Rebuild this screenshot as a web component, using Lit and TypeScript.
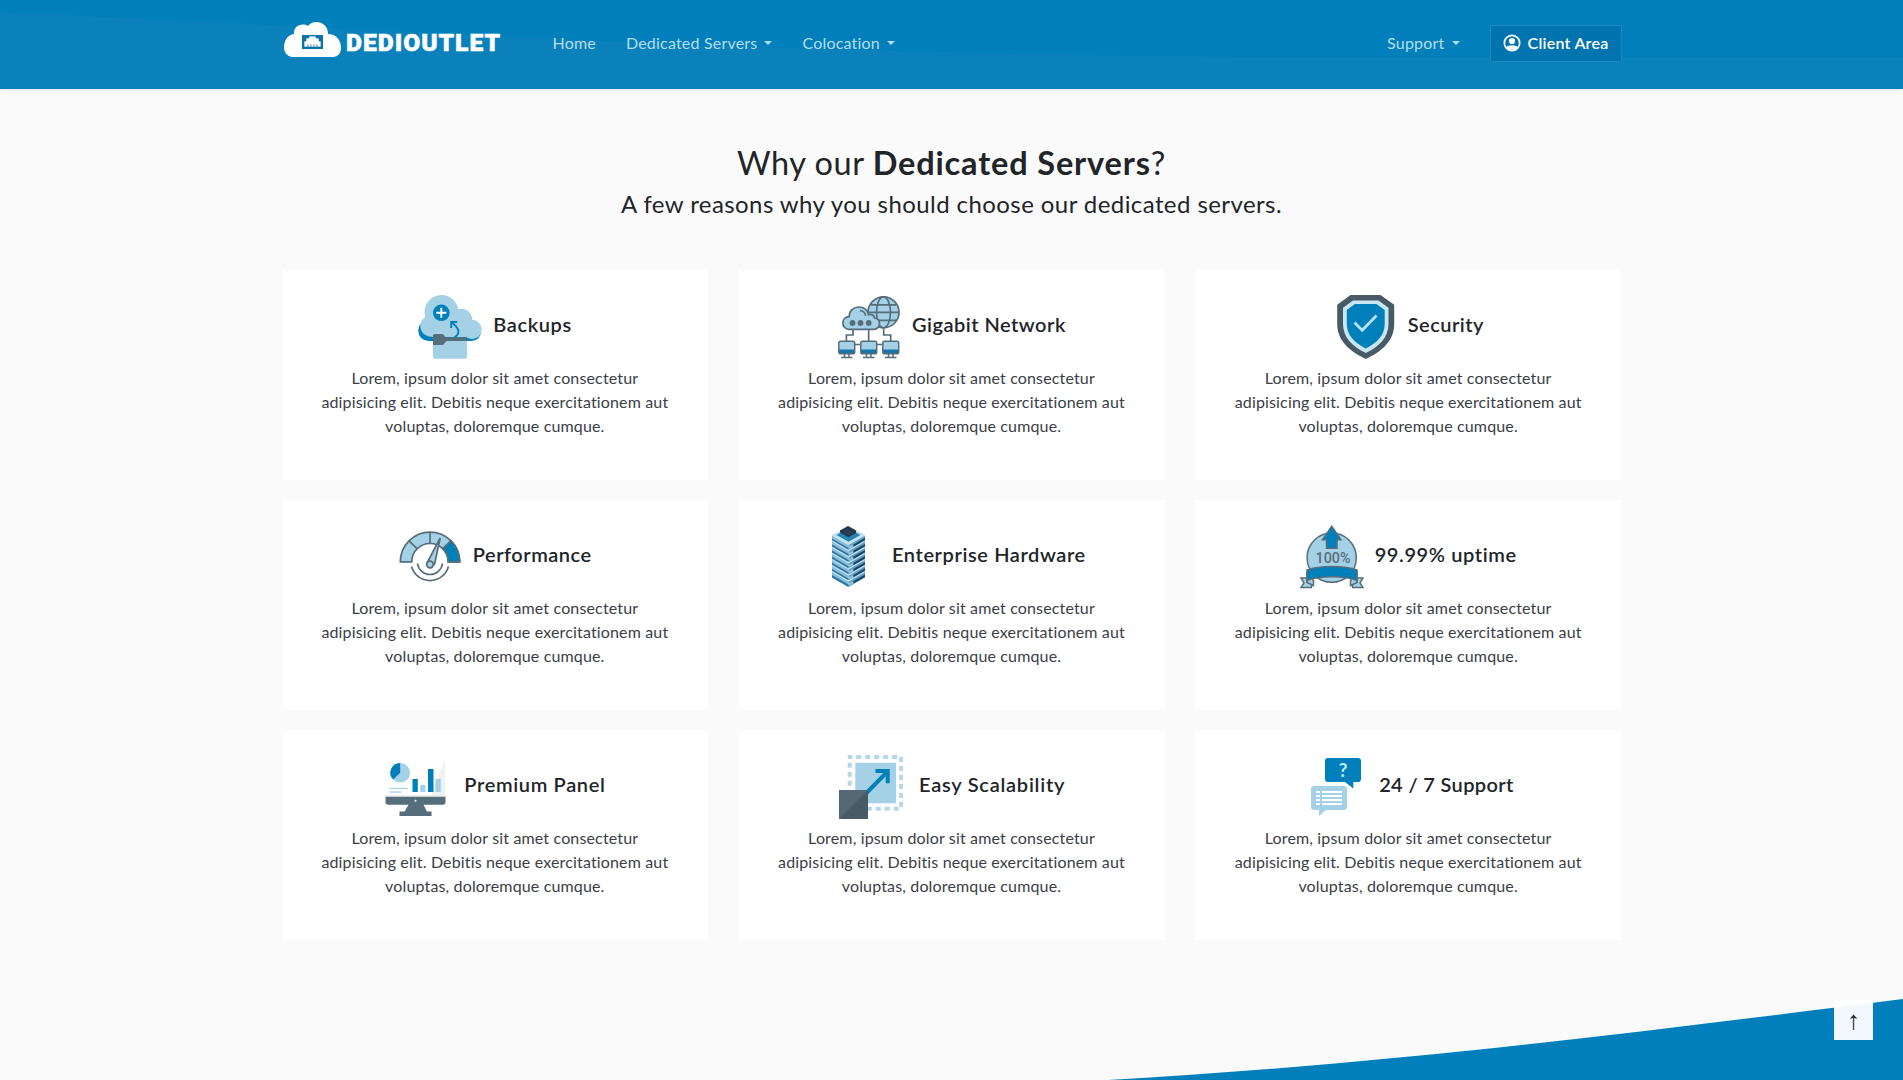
import { LitElement, html, svg, css } from "lit";
import { customElement } from "lit/decorators.js";

const L = "#a5d1e6", B = "#0080bb", G = "#566e7a", D = "#475a66";

const monitor = (x: number) => svg`<g transform="translate(${x} 45.5)">
  <rect x="1" y="1" width="15.5" height="12" rx="1.6" fill=${L}/>
  <path d="M1 9h15.500v2.500a1.500 1.500 0 0 1-1.500 1.500H2.500A1.500 1.500 0 0 1 1 11.500z" fill="#1575a8"/>
  <rect x=".8" y=".8" width="15.900" height="12.400" rx="1.800" fill="none" stroke=${G} stroke-width="1.500"/>
  <path d="M6.500 13v3.500M11 13v3.500M3 17h11.500" stroke=${G} stroke-width="1.500" fill="none"/></g>`;

const serverLayers = [0, 1, 2, 3, 4, 5, 6].map((i) => {
  const y = 10 + i * 6.1;
  return svg`<path d="M15 ${y}l16.500 9.500v6l-16.500-9.500z" fill="#8bbcd9"/>
  <path d="M48 ${y}l-16.500 9.500v6l16.500-9.500z" fill="#5fa0c5"/>
  <path d="M15 ${y + 3.4}l16.500 9.500v2.600l-16.500-9.500z" fill="#2b77a6"/>
  <path d="M36.500 ${y + 9.4}l11.500-6.600v2.600l-11.500 6.600z" fill="#1b4568"/>
  <path d="M15 ${y}l16.500 9.500 16.500-9.500" fill="none" stroke="#c3e2f0" stroke-width="1.200"/>
  <path d="M33 ${y + 11.3}v2M35 ${y + 10.3}v2" stroke="#e3f5fc" stroke-width=".9"/>`;
});

const icons: Record<string, unknown> = {
  backups: svg`<g fill=${B}><rect x=".2" y="25" width="26" height="21" rx="10.500"/><rect x="15" y="27" width="48" height="19" rx="9.500"/></g>
    <g fill=${L}><circle cx="23.500" cy="17" r="17"/><circle cx="43" cy="25" r="11.300"/><circle cx="54" cy="34.500" r="9.700"/><circle cx="13" cy="31" r="10.700"/><path d="M12 20h32l10 22H14z"/></g>
    <path d="M15 45h34v17a1.700 1.700 0 0 1-1.700 1.700H16.700A1.700 1.700 0 0 1 15 62z" fill=${L}/>
    <path d="M15 40.500a1.500 1.500 0 0 1 1.500-1.500h7.500c2 0 2.500 3.300 5 3.300h18.500a1.500 1.500 0 0 1 1.500 1.500V46H29c-2 0-2.500 4-5 4h-9z" fill=${G}/>
    <circle cx="23.300" cy="17.800" r="8.300" fill=${B}/><path d="M23.300 12.800v10M18.300 17.800h10" stroke="#fff" stroke-width="1.900"/>
    <path d="M36.500 42.300c5.500-3.300 5.800-8.800-3-14.800M33.200 33v-6h6" fill="none" stroke=${B} stroke-width="1.900"/>`,
  network: svg`<g fill="none" stroke=${G} stroke-width="1.700"><circle cx="45.500" cy="17.300" r="15.500" fill=${L}/><ellipse cx="45.500" cy="17.300" rx="7" ry="15.500"/><path d="M33 9.800h25M30 17.300h31M33 25.300h25"/>
    <path d="M15 34v6H8.400v6M30.700 34v12M45.700 34v6h7v6M17 49.500h5M39 49.500h5"/>
    <path d="M10.500 34.300a6 6 0 0 1-5.600-6.300c0-3.800 2.700-6.200 6.300-6.300C11 16 15.500 12 21 12c5 0 8.800 3.300 9.500 7.800 2.200-.9 5.700 0 6 3.200 3 .3 5 2.600 5 5.500 0 3.300-2.500 5.800-5.500 5.800z" fill=${L}/><path d="M22 15.500c3 .3 5 2.300 5.700 5.300"/></g>
    <g fill=${G}><circle cx="14.500" cy="28" r="2.900"/><circle cx="22.500" cy="28" r="2.900"/><circle cx="30.700" cy="28" r="2.900"/></g>${monitor(0)}${monitor(22)}${monitor(44)}`,
  security: svg`<path d="M17.500 0h30l13.700 9.800V29c0 17-12.500 27.500-28.400 35C17 56.500 4.200 46 4.200 29V9.800z" fill=${D}/>
    <path d="M20 5.500h25.500l10 7.300V29c0 13.500-9.500 22.500-22.700 29C19.500 51.500 10 42.500 10 29V12.800z" fill="#c9e6f4"/>
    <path d="M22 9h21.500l8.200 6v14c0 11.500-7.700 18.500-18.900 24.500C21.500 47.500 13.800 40.500 13.800 29V15z" fill=${B}/>
    <path d="M21.500 27.500l7.700 7.700L43.500 20.500" fill="none" stroke="#b8e2f5" stroke-width="2.800"/>`,
  performance: svg`<g transform="translate(0 -.5)" stroke=${G} stroke-width="1.700" fill="none"><path d="M1.300 37.300a29.700 29.700 0 0 1 59.400 0H49.300a18.300 18.300 0 0 0-36.600 0z" fill=${L}/>
    <path d="M52 16.300a29.700 29.700 0 0 1 8.700 21H49.300a18.300 18.300 0 0 0-5.300-13z" fill=${B}/><path d="M10 16.300l8.400 8M31 7.600V19M52 16.300l-8.400 8"/>
    <path d="M12.500 42a19.200 19.200 0 0 0 37 0M18.500 39a12.600 12.600 0 0 0 25 0"/><path d="M41.200 13.500l-5.500 25.500c-.8 3-8.500 2.500-7.700-.5z" fill=${L}/><circle cx="31" cy="40" r="3.300" fill=${L}/></g>`,
  hardware: svg`${serverLayers}<path d="M31.500.700L48 10l-16.500 9.500L15 10z" fill="#c3e2f0"/><path d="M31.500 3.300L43.500 10l-12 6.800L19.500 10z" fill="#2684b4"/><path d="M31 .900L39 5.500v2.600l-7.500 4.200-8.500-4.800V5.500z" fill="#22364c"/><path d="M29 4.800l7 3.800M27 6.500l6 3.400" stroke="#3f5770" stroke-width=".7"/>`,
  uptime: svg`<g stroke=${G} stroke-width="1.500"><circle cx="31.700" cy="32.700" r="24.600" fill=${L}/><path d="M31.700 1.300l9.300 13.500h-4v8.500H26.500v-8.500h-4z" fill=${B}/>
    <path d="M1 53h10.500v9.500H1l3-4.700zM63 53H52.500v9.500H63l-3-4.700z" fill=${L}/><path d="M7 48v9.500l6.500 3v-5zM57 48v9.500l-6.500 3v-5z" fill=${L}/>
    <path d="M7 45c12-4.800 38-4.800 50 0v10.500c-12-5-38-5-50 0z" fill=${B}/></g>
    <text x="15.500" y="38.200" textLength="35" lengthAdjust="spacingAndGlyphs" font-family="Roboto, sans-serif" font-weight="500" font-size="14.500" fill=${G}>100%</text>`,
  panel: svg`<path d="M61 4v38H46z" fill="#f0f1f3"/><circle cx="16.200" cy="17.700" r="9.800" fill=${L}/><path d="M16.200 17.700V7.900a9.800 9.800 0 0 0-7 16.700z" fill=${B}/>
    <g fill=${B}><rect x="28.500" y="24" width="5.300" height="13"/><rect x="44" y="14" width="5.500" height="23"/></g><g fill=${L}><rect x="36.200" y="30" width="5.300" height="7"/><rect x="51.500" y="24" width="5.300" height="13"/><rect x="5.500" y="32.800" width="18.300" height="1.300"/><rect x="5.500" y="36.400" width="12" height="1.300"/></g>
    <path d="M1.500 40h60v1.700h-60z" fill="#eceff1"/><path d="M1.500 41.700h60V47a2.700 2.700 0 0 1-2.700 2.700H4.200A2.700 2.700 0 0 1 1.500 47zM24.500 49.700h15l3.500 7H20.500zM15.500 56.500h32V61h-32z" fill=${G}/><circle cx="31.500" cy="45.700" r="1" fill="#fff"/>`,
  scale: svg`<rect x="10.700" y="2" width="51.400" height="51.700" fill="none" stroke="#b3d8e7" stroke-width="4" stroke-dasharray="5 4" stroke-dashoffset="2.500"/><rect x="16.300" y="7.700" width="40.700" height="40.600" fill=${L}/>
    <path d="M27 38.500l22-22.500M36.500 16h12.200v12.200" fill="none" stroke=${B} stroke-width="4"/><path d="M0 33h14v2H0z" fill="#fff"/><rect y="35" width="29" height="29" fill="#566874"/><path d="M29 35v29H0z" fill=${D}/>`,
  support: svg`<path d="M25 3h30a3 3 0 0 1 3 3v18a3 3 0 0 1-3 3h-4.700v6.500L42 27H25a3 3 0 0 1-3-3V6a3 3 0 0 1 3-3z" fill=${B}/>
    <text x="40" y="21.500" text-anchor="middle" font-family="Lato, sans-serif" font-size="19" font-weight="700" fill="#c5ecfa">?</text>
    <path d="M11 31h30a3 3 0 0 1 3 3v18a3 3 0 0 1-3 3H23l-7 6v-6h-5a3 3 0 0 1-3-3V34a3 3 0 0 1 3-3z" fill=${L}/>
    <path d="M13 37h4M19 37h20M13 41h4M19 41h20M13 45h4M19 45h20M13 49h4M19 49h20" stroke="#fff" stroke-width="1.900"/>`,
};

/* gap: icon-to-title distance; width and spacing: title box and tracking, in px */
const features = [
  { icon: "backups", title: "Backups", width: 79, spacing: 0.6, gap: 10 },
  { icon: "network", title: "Gigabit Network", width: 154, spacing: 0.5, gap: 9 },
  { icon: "security", title: "Security", width: 77, spacing: 0.5, gap: 10 },
  { icon: "performance", title: "Performance", width: 119, spacing: 0.5, gap: 9 },
  { icon: "hardware", title: "Enterprise Hardware", width: 195, spacing: 0.6, gap: 10 },
  { icon: "uptime", title: "99.99% uptime", width: 143, spacing: 0.6, gap: 10 },
  { icon: "panel", title: "Premium Panel", width: 142, spacing: 0.65, gap: 15 },
  { icon: "scale", title: "Easy Scalability", width: 146, spacing: 0.75, gap: 15 },
  { icon: "support", title: "24 / 7 Support", width: 135, spacing: 0.35, gap: 11 },
];

@customElement("app-root")
export class AppRoot extends LitElement {
  static styles = css`
    :host { display: block; height: 1080px; overflow: hidden; position: relative; background: #fafafa; color: #212529; font-family: Lato, "Open Sans", sans-serif; font-size: 16px; line-height: 24px; }
    * { box-sizing: border-box; }
    .wrap { width: 1340px; margin: 0 auto; }
    header { position: relative; height: 89px; background: #007fbb; box-shadow: 0 1px 3px #dbe8f7; }
    .wave { position: absolute; inset: 0; width: 100%; height: 89px; }
    .bar { position: relative; display: flex; align-items: center; height: 87px; }
    .logo { width: 219px; height: 38px; margin: -8px 0 0 1px; }
    nav { display: flex; gap: 30px; margin-left: 51px; flex: 1; }
    .link { display: flex; align-items: center; gap: 7px; color: #b5ddef; white-space: nowrap; letter-spacing: .2px; margin-top: -2px; }
    .caret { border: 4px solid transparent; border-top-color: currentColor; border-bottom: 0; margin-top: 0; }
    .client { display: flex; align-items: center; gap: 7px; width: 132px; height: 37px; margin-left: 30px; padding-left: 12px; padding-bottom: 1px; border: 1px solid #1a86bc; background: #0074ae; color: #fff; font-weight: 600; letter-spacing: .25px; white-space: nowrap; }
    .intro { text-align: center; padding-top: 54px; height: 181px; }
    h1 { margin: 0; font-size: 32.5px; line-height: 40px; font-weight: 400; letter-spacing: .5px; }
    h1 b { font-weight: 700; letter-spacing: .85px; }
    .lead { margin: 3px 0 0; font-size: 24px; line-height: 36px; letter-spacing: .42px; }
    .grid { display: grid; grid-template-columns: repeat(3, 1fr); gap: 20px 30px; }
    .card { height: 210px; background: #fff; padding: 25px 30px; text-align: center; }
    .head { display: flex; justify-content: center; align-items: center; height: 64px; }
    .icon { width: 64px; height: 64px; flex: none; }
    h2 { margin: 0 0 7px; padding-left: 1px; font-size: 20px; line-height: 24px; font-weight: 600; text-align: left; white-space: nowrap; }
    p { margin: 7px 0 0; color: #3a4046; white-space: nowrap; letter-spacing: .15px; }
    .swoosh { position: absolute; right: 0; bottom: 0; width: 800px; height: 82px; }
    .top { position: absolute; left: 1834px; top: 1000px; width: 39px; height: 40px; display: grid; place-items: center; background: rgba(255,255,255,.95); font: 26px/1 "Liberation Sans", sans-serif; }
  `;
  render() {
    return html`
      <header>
        <svg class="wave" viewBox="0 0 1903 89" preserveAspectRatio="none"><path d="M0 12C500 35 800 57 1360 57H1903V89H0z" fill="#0a81ba"/></svg>
        <div class="wrap bar">
          <svg class="logo" viewBox="0 0 219 38">
            <path d="M9 36a9 9 0 0 1-8-9c0-7 3-13 10-14C10 6 18 1 25 5c5-7 20-5 20 8 8 0 13 6 13 14 0 5-3 9-8 9z" fill="#fff"/>
            <rect x="19" y="14" width="21" height="14" fill="#0c72a8"/><path d="M21 26v-6h2v-3h3v-2h7v2h3v3h2v6zM25 27v-4M28 27v-4M31 27v-4M34 27v-4" fill="#fff" stroke="#0c72a8" stroke-width=".7"/>
            <text x="63" y="30" textLength="155" lengthAdjust="spacingAndGlyphs" font-family="Roboto, sans-serif" font-weight="900" font-size="24.500" letter-spacing="1" fill="#fff" stroke="#fff" stroke-width=".5">DEDIOUTLET</text>
          </svg>
          <nav><span class="link">Home</span>
          <span class="link">Dedicated Servers<i class="caret"></i></span>
          <span class="link">Colocation<i class="caret"></i></span></nav>
          <span class="link">Support<i class="caret"></i></span>
          <div class="client"><svg width="18" height="18" viewBox="0 0 18 18"><circle cx="9" cy="9" r="7.700" fill="none" stroke="#fff" stroke-width="1.700"/><circle cx="9" cy="7" r="3.100" fill="#fff"/><path d="M3 13.500c1.500-3 10.500-3 12 0-2 4-10 4-12 0z" fill="#fff"/></svg><span>Client Area</span></div>
        </div>
      </header>
      <section class="intro"><h1>Why our <b>Dedicated Servers</b>?</h1><div class="lead">A few reasons why you should choose our dedicated servers.</div></section>
      <main class="wrap grid">${features.map((f) => html`<article class="card"><div class="head" style="gap:${f.gap}px"><svg class="icon" viewBox="0 0 64 64">${icons[f.icon]}</svg><h2 style="width:${f.width}px;letter-spacing:${f.spacing}px">${f.title}</h2></div>
        <p>Lorem, ipsum dolor sit amet consectetur<br>adipisicing elit. Debitis neque exercitationem aut<br>voluptas, doloremque cumque.</p></article>`)}</main>
      <svg class="swoosh" viewBox="0 0 800 82"><path d="M5 82C285 66 522 36 800 1V82z" fill="#007fbb"/></svg>
      <div class="top">↑</div>`;
  }
}
